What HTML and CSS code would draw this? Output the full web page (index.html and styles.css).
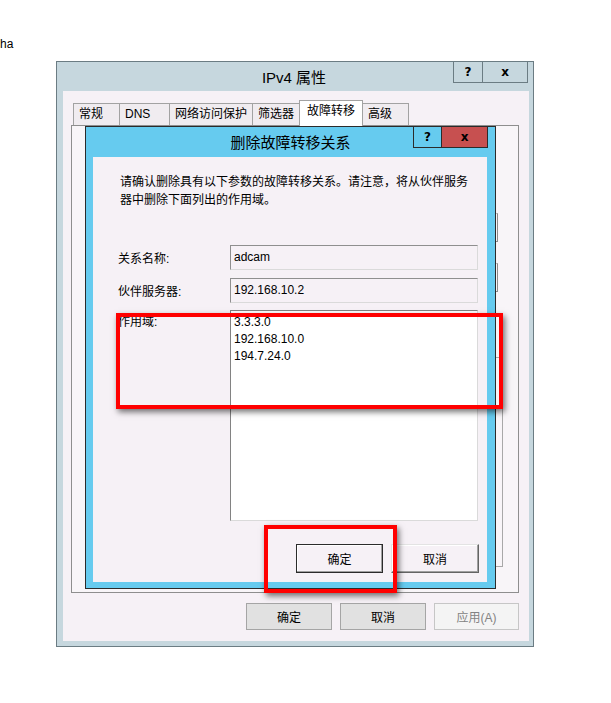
FILE: index.html
```html
<!DOCTYPE html>
<html lang="zh-CN">
<head>
    <meta charset="UTF-8">
    <meta name="viewport" content="width=device-width, initial-scale=1.0">
    <title>IPv4 属性</title>
    <link rel="stylesheet" href="styles.css">
</head>
<body>
    <div class="note">ha</div>

    <div class="window">
        <div class="titlebar">
            <span class="title">IPv4 属性</span>
            <div class="caption-btns">
                <span class="cap-btn">?</span>
                <span class="cap-btn cap-close">x</span>
            </div>
        </div>

        <div class="client">
            <div class="tabs">
                <span class="tab">常规</span>
                <span class="tab tab-dns">DNS</span>
                <span class="tab">网络访问保护</span>
                <span class="tab">筛选器</span>
                <span class="tab active">故障转移</span>
                <span class="tab">高级</span>
            </div>
            <div class="tab-panel">
                <!-- controls of the failover page, mostly hidden by the dialog -->
                <div class="behind-field"></div>
                <div class="behind-field second"></div>
                <div class="behind-group"></div>
            </div>
            <div class="footer">
                <button class="btn">确定</button>
                <button class="btn">取消</button>
                <button class="btn" disabled>应用(A)</button>
            </div>
        </div>

        <!-- child dialog on top of the properties window -->
        <div class="dialog">
            <div class="dialog-titlebar">
                <span class="title">删除故障转移关系</span>
                <div class="caption-btns dialog-caps">
                    <span class="cap-btn">?</span>
                    <span class="cap-btn cap-close">x</span>
                </div>
            </div>
            <div class="dialog-body">
                <p class="intro">请确认删除具有以下参数的故障转移关系。请注意，将从伙伴服务<br>器中删除下面列出的作用域。</p>
                <div class="form">
                    <label>关系名称:</label>
                    <div class="field">adcam</div>
                    <label>伙伴服务器:</label>
                    <div class="field">192.168.10.2</div>
                    <label class="top">作用域:</label>
                    <ul class="scope-list">
                        <li>3.3.3.0</li>
                        <li>192.168.10.0</li>
                        <li>194.7.24.0</li>
                    </ul>
                </div>
                <div class="dialog-actions">
                    <button class="btn-classic default">确定</button>
                    <button class="btn-classic">取消</button>
                </div>
            </div>
        </div>

        <!-- red annotation boxes -->
        <div class="mark mark-scopes"></div>
        <div class="mark mark-ok"></div>
    </div>
</body>
</html>
```

FILE: styles.css
```css
body {
    margin: 0;
    background: #fff;
    color: #000;
    font-family: "Liberation Sans", "Noto Sans CJK SC", sans-serif;
    font-size: 12px;
}
.note {
    height: 61px;
    box-sizing: border-box;
    padding-top: 36px;
    line-height: 16px;
}
.window {
    position: relative;
    margin-left: 56px;
    width: 478px;
    height: 586px;
    box-sizing: border-box;
    border: 1px solid #6b7c83;
    background: #c6d7de;
    padding: 0 4px 5px 6px;
}
.titlebar {
    position: relative;
    height: 29px;
}
.titlebar .title {
    display: block;
    text-align: center;
    line-height: 32px;
    font-size: 15px;
    padding-right: 4px;
}
.caption-btns {
    position: absolute;
    top: -1px;
    right: 1px;
    display: flex;
}
.cap-btn {
    width: 30px;
    height: 22px;
    box-sizing: border-box;
    border: 1px solid #6b7c83;
    text-align: center;
    line-height: 20px;
    font-family: "DejaVu Sans", sans-serif;
    font-weight: bold;
    font-size: 12px;
}
.cap-close {
    width: 46px;
    margin-left: -1px;
}
.client {
    height: 550px;
    box-sizing: border-box;
    background: #f6f1f6;
    padding: 9px 10px 0 8px;
}
.tabs {
    display: flex;
    align-items: flex-end;
    height: 25px;
    padding-left: 2px;
    position: relative;
    z-index: 1;
}
.tab {
    height: 22px;
    min-width: 47px;
    box-sizing: border-box;
    padding: 0 5px;
    border: 1px solid #a2a2a2;
    border-bottom: none;
    background: #f0ecf0;
    line-height: 21px;
    margin-left: -1px;
}
.tab:first-child {
    margin-left: 0;
}
.tab-dns {
    min-width: 51px;
}
.tab.active {
    height: 26px;
    padding: 0 7px;
    margin-bottom: -1px;
    background: #fff;
    line-height: 21px;
}
.tab-panel {
    height: 468px;
    box-sizing: border-box;
    border: 1px solid #8e8e8e;
    background: #f8f5f8;
    overflow: hidden;
}
.behind-field {
    margin: 87px 0 0 158px;
    width: 268px;
    height: 29px;
    box-sizing: border-box;
    border: 1px solid;
    border-color: #bdbdbd #8a8a8a #8a8a8a #bdbdbd;
}
.behind-field.second {
    margin-top: 21px;
}
.behind-group {
    margin: 65px 0 0 24px;
    width: 407px;
    height: 210px;
    box-sizing: border-box;
    border: 1px solid #a8a8a8;
}
.footer {
    display: flex;
    justify-content: flex-end;
    gap: 8px;
    margin-top: 10px;
}
.btn {
    width: 86px;
    height: 27px;
    padding: 0;
    border: 1px solid #a5a5a5;
    background: #e1e1e1;
    color: #000;
    font: inherit;
}
.btn:disabled {
    width: 85px;
    background: #f4f4f4;
    border-color: #c6c6c6;
    color: #838383;
}
.dialog {
    position: absolute;
    left: 28px;
    top: 64px;
    width: 411px;
    height: 463px;
    box-sizing: border-box;
    border: 1px solid #2b2b2b;
    background: #66cbef;
    padding: 0 8px 6px 7px;
    display: flex;
    flex-direction: column;
}
.dialog-titlebar {
    position: relative;
    height: 30px;
    margin: 0 -8px 0 -7px;
}
.dialog-titlebar .title {
    display: block;
    text-align: center;
    line-height: 31px;
    font-size: 15px;
}
.dialog-caps {
    right: 7px;
}
.dialog-caps .cap-btn {
    width: 29px;
    border-color: #2b2b2b;
}
.dialog-caps .cap-close {
    width: 47px;
    background: #c75050;
}
.dialog-body {
    flex: 1;
    background: #f6f1f6;
    padding: 16px 8px 0 25px;
}
.intro {
    margin: 0 0 0 2px;
    line-height: 18px;
}
.form {
    display: grid;
    grid-template-columns: 112px 248px;
    row-gap: 8px;
    align-items: center;
    margin-top: 36px;
}
.form .top {
    align-self: start;
    padding-top: 3px;
    line-height: 17px;
}
.field {
    height: 25px;
    box-sizing: border-box;
    border: 1px solid;
    border-color: #8f8f8f #dadada #dadada #8f8f8f;
    padding-left: 3px;
    line-height: 23px;
}
.scope-list {
    height: 211px;
    box-sizing: border-box;
    margin: -1px 0 0;
    padding: 3px 3px 0;
    list-style: none;
    background: #fff;
    border: 1px solid;
    border-color: #828282 #dadada #dadada #828282;
    line-height: 17px;
}
.dialog-actions {
    display: flex;
    justify-content: flex-end;
    gap: 8px;
    margin-top: 23px;
}
.btn-classic {
    width: 88px;
    height: 29px;
    padding: 0;
    background: #f6f1f6;
    border: 1px solid;
    border-color: #e3e3e3 #646464 #646464 #e3e3e3;
    box-shadow: inset -1px -1px #a0a0a0, inset 1px 1px #fff;
    color: #000;
    font: inherit;
}
.btn-classic.default {
    width: 87px;
    border-color: #2b2b2b;
}
.mark {
    position: absolute;
    box-sizing: border-box;
    border: 4px solid #ff0000;
    box-shadow: 2px 3px 6px rgba(0, 0, 0, 0.55);
}
.mark-scopes {
    left: 59px;
    top: 251px;
    width: 387px;
    height: 96px;
}
.mark-ok {
    left: 207px;
    top: 463px;
    width: 133px;
    height: 68px;
}
```
